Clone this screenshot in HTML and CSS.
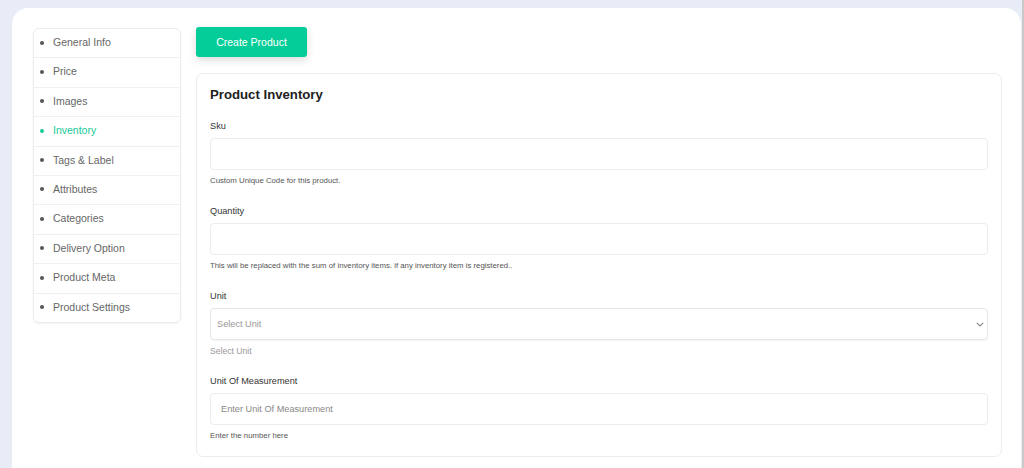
FILE: index.html
```html
<!DOCTYPE html>
<html lang="en">
    <head>
        <meta charset="UTF-8">
        <meta name="viewport" content="width=device-width, initial-scale=1.0">
        <title> Product Inventory </title>
        <link rel="stylesheet" href="styles.css">
    </head>

    <body>

        <div class="pageCard">

            <!-- Menu des sections du produit -->
            <ul class="sideMenu">
                <li class="sideItem">General Info</li>
                <li class="sideItem">Price</li>
                <li class="sideItem">Images</li>
                <li class="sideItem active">Inventory</li>
                <li class="sideItem">Tags &amp; Label</li>
                <li class="sideItem">Attributes</li>
                <li class="sideItem">Categories</li>
                <li class="sideItem">Delivery Option</li>
                <li class="sideItem">Product Meta</li>
                <li class="sideItem">Product Settings</li>
            </ul>

            <main class="mainZone">

                <button class="btnCreate" type="button">Create Product</button>

                <section class="formCard">

                    <h2 class="formTitle">Product Inventory</h2>

                    <div class="formGroup">
                        <label class="formLabel" for="sku">Sku</label>
                        <input class="formInput" id="sku" type="text">
                        <p class="formHelp">Custom Unique Code for this product.</p>
                    </div>

                    <div class="formGroup">
                        <label class="formLabel" for="quantity">Quantity</label>
                        <input class="formInput" id="quantity" type="text">
                        <p class="formHelp">This will be replaced with the sum of inventory items. if any inventory item is registered..</p>
                    </div>

                    <div class="formGroup">
                        <label class="formLabel" for="unit">Unit</label>
                        <div class="selectBox">
                            <select class="formInput formSelect" id="unit">
                                <option>Select Unit</option>
                            </select>
                            <svg class="chevron" width="8" height="5" viewBox="0 0 8 5">
                                <path d="M0.8 0.8 L4 4 L7.2 0.8" fill="none" stroke="#888" stroke-width="1.1"/>
                            </svg>
                        </div>
                        <p class="formHelp helpLight">Select Unit</p>
                    </div>

                    <div class="formGroup lastGroup">
                        <label class="formLabel" for="measure">Unit Of Measurement</label>
                        <input class="formInput" id="measure" type="text" placeholder="Enter Unit Of Measurement">
                        <p class="formHelp">Enter the number here</p>
                    </div>

                </section>

            </main>

        </div>

    </body>
</html>
```

FILE: styles.css
```css
/* Modifications générales */
html { background-color: #e8ecf7; box-shadow: inset -2px 0 0 #c9c9c9; }
body
{
    margin: 0;
    padding: 8px 0 0 12px;
    font-family: 'Liberation Sans', Arial, sans-serif;
    color: #333;
    overflow: hidden;
    height: 460px;
}

/* Carte blanche */
.pageCard
{
    width: 1009px;
    min-height: 500px;
    box-sizing: border-box;
    background-color: #ffffff;
    border-radius: 16px;
    padding: 20px 19px 0 21px;

    display: grid;
    grid-template-columns: 148px 1fr;
    column-gap: 15px;
    align-items: start;
}

/* Menu latéral */
.sideMenu
{
    list-style: none;
    margin: 0;
    padding: 0;
    border: 1px solid #ececec;
    border-radius: 6px;
    box-shadow: 0 1px 2px rgba(0, 0, 0, 0.05);
}
.sideItem
{
    height: 28.4px;
    line-height: 27px;
    border-bottom: 1px solid #f0f0f0;
    padding-left: 19px;
    font-size: 10.5px;
    color: #666;
    position: relative;
}
.sideItem:last-child { border-bottom: none; }
.sideItem::before
{
    content: "";
    position: absolute;
    left: 6px;
    top: 11.5px;
    width: 4px;
    height: 4px;
    border-radius: 50%;
    background-color: #555;
}
.sideItem.active { color: #18c99a; }
.sideItem.active::before { background-color: #18c99a; }

/* Zone principale */
.mainZone { display: flex; flex-direction: column; align-items: flex-start; margin-top: -1px; }

.btnCreate
{
    width: 111px;
    height: 30px;
    border: none;
    border-radius: 3px;
    background-color: #05cd99;
    color: #ffffff;
    font-family: 'Liberation Sans', Arial, sans-serif;
    font-size: 10.5px;
    box-shadow: 0 3px 8px rgba(0, 0, 0, 0.15);
}

.formCard
{
    align-self: stretch;
    margin-top: 16px;
    border: 1px solid #ececec;
    border-radius: 7px;
    padding: 12px 13px 14px 13px;
}
.formTitle
{
    margin: 0 0 15px 0;
    font-size: 13.2px;
    line-height: 18px;
    font-weight: 700;
    color: #222;
}

/* Champs du formulaire */
.formGroup { margin-bottom: 17px; }
.lastGroup { margin-bottom: 0; }
.formLabel
{
    display: block;
    font-size: 9.2px;
    line-height: 14px;
    color: #333;
    margin-bottom: 5px;
}
.formInput
{
    display: block;
    width: 100%;
    height: 32px;
    box-sizing: border-box;
    border: 1px solid #ececec;
    border-radius: 4px;
    padding: 0 10px;
    font-family: 'Liberation Sans', Arial, sans-serif;
    font-size: 9.2px;
    color: #888;
    background-color: #ffffff;
}
.formInput::placeholder { color: #888; }

.selectBox { position: relative; }
.formSelect
{
    appearance: none;
    padding-left: 6px;
    border: 1px solid #e6e6e6;
    box-shadow: 0 1px 1px rgba(0, 0, 0, 0.04);
    color: #999;
}
.chevron { position: absolute; right: 4px; top: 14px; }

.formHelp
{
    margin: 5px 0 0 0;
    font-size: 7.8px;
    line-height: 12px;
    color: #555;
}
.helpLight { color: #999; font-size: 8.6px; }
```
